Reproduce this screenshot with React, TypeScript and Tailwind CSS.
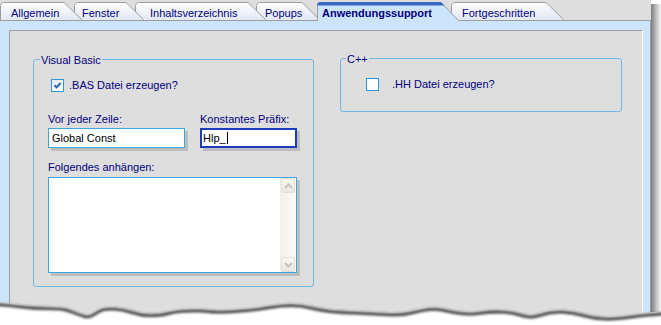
import React from "react";

type TabDef = { label: string; w: number; cls: string; textCls: string; active?: boolean };

const TABS: TabDef[] = [
  { label: "Allgemein", w: 82, cls: "w-[82px] z-[6]", textCls: "pl-[11px]" },
  { label: "Fenster", w: 70, cls: "w-[70px] -ml-[8px] z-[5]", textCls: "pl-[8px]" },
  { label: "Inhaltsverzeichnis", w: 131, cls: "w-[131px] -ml-[9px] z-[4]", textCls: "pl-[15px]" },
  { label: "Popups", w: 64, cls: "w-[64px] -ml-[10px] z-[3]", textCls: "pl-[9px]" },
  { label: "Anwendungssupport", w: 142, cls: "w-[142px] -ml-[3px] z-[10] h-[19px] -mb-px", textCls: "pl-[5px] font-bold", active: true },
  { label: "Fortgeschritten", w: 113, cls: "w-[113px] -ml-[8px] z-[2]", textCls: "pl-[11px]" },
];

function Tab({ t, i }: { t: TabDef; i: number }) {
  const h = t.active ? 19 : 18;
  const w = t.w;
  const outline = `M0.5,${h} V3.5 Q0.5,0.5 3.5,0.5 H${w - 18} L${w - 0.5},${h - 0.5}`;
  const fillPath = `M0,${h} V3.5 Q0,0 3.5,0 H${w - 18} L${w},${h} Z`;
  const gid = `tabg${i}`;
  return (
    <div className={`relative shrink-0 ${t.active ? "" : "h-[18px]"} ${t.cls}`}>
      <svg className="absolute left-0 top-0" width={w} height={h} viewBox={`0 0 ${w} ${h}`}>
        <defs>
          <linearGradient id={gid} x1="0" y1="0" x2="0" y2="1">
            <stop offset="0" stopColor="#ffffff" />
            <stop offset="1" stopColor="#e1e8f3" />
          </linearGradient>
        </defs>
        <path d={fillPath} fill={t.active ? "#cde5fc" : `url(#${gid})`} />
        <path d={outline} fill="none" stroke="#9c9c9c" />
        {t.active && <path d={`M0,3.5 Q0,0 3.5,0 H${w - 18} L${w - 14.5},3.5 Z`} fill="#3a68c4" />}
      </svg>
      <div className={`relative pt-[5px] whitespace-nowrap text-[#000080] ${t.textCls}`}>{t.label}</div>
    </div>
  );
}

function Check({ checked }: { checked?: boolean }) {
  return (
    <span
      className={`inline-flex w-[13px] h-[13px] shrink-0 items-center justify-center border border-[#2f96dc] ${
        checked ? "bg-gradient-to-br from-[#e4e7ea] to-white" : "bg-white"
      }`}
    >
      {checked && (
        <svg width="11" height="11" viewBox="0 0 11 11">
          <path d="M2.5,5.2 L4.6,7.4 L8.6,3" stroke="#2a62c8" strokeWidth="2" fill="none" />
        </svg>
      )}
    </span>
  );
}

function ScrollBtn({ up }: { up?: boolean }) {
  return (
    <div className="w-[14px] h-[15px] mx-auto rounded-[2px] border border-[#e2dfd4] bg-gradient-to-b from-[#f8f7f2] to-[#ebe9e0] flex items-center justify-center">
      <svg width="9" height="6" viewBox="0 0 9 6">
        <path d={up ? "M1,5 L4.5,1.5 L8,5" : "M1,1 L4.5,4.5 L8,1"} stroke="#c5c2b6" strokeWidth="2" fill="none" />
      </svg>
    </div>
  );
}

const PTS: [number, number][] = [
  [-4, 302], [10, 303], [33, 306], [60, 306], [70, 309], [80, 313], [88, 315], [96, 310], [104, 306],
  [122, 307], [140, 313], [160, 313], [174, 309], [200, 308], [215, 310], [250, 308], [280, 303],
  [300, 303], [320, 308], [340, 310], [370, 311], [400, 313], [420, 308], [435, 306], [452, 310],
  [470, 312], [490, 309], [512, 310], [530, 316], [550, 309], [572, 310], [597, 317], [620, 316],
  [640, 313], [655, 312], [665, 311],
];

function smooth(pts: [number, number][], dx = 0, dy = 0) {
  let d = `M${pts[0][0] + dx},${pts[0][1] + dy}`;
  for (let i = 1; i < pts.length - 1; i++) {
    const [x, y] = pts[i];
    const [nx, ny] = pts[i + 1];
    d += ` Q${x + dx},${y + dy} ${(x + nx) / 2 + dx},${(y + ny) / 2 + dy}`;
  }
  const last = pts[pts.length - 1];
  d += ` L${last[0] + dx},${last[1] + dy}`;
  return d;
}

export default function App() {
  return (
    <div className="relative w-[661px] h-[325px] overflow-hidden bg-white font-['Liberation_Sans',Arial,sans-serif] text-[11px] leading-[13px]">
      <div className="w-[651px] h-[325px] bg-[#dedede] flex flex-col">
        {/* tab strip */}
        <div className="relative z-10 h-[20px] flex items-end">
          {TABS.map((t, i) => (
            <Tab key={t.label} t={t} i={i} />
          ))}
        </div>
        {/* tab panel */}
        <div className="flex-1 flex flex-col border-t border-r border-[#9c9c9c] bg-[#cde5fc] pl-[9px] pt-[9px] pr-[7px]">
          <div className="flex-1 flex items-start gap-[26px] border-l border-t border-r border-l-[#a0a0a0] border-t-[#a0a0a0] border-r-white bg-[#dedede] pl-[23px] pt-[28px]">
            {/* Visual Basic group */}
            <div className="relative w-[281px] border border-[#6cb8e6] rounded-[3px] pl-[14px] pt-[19px] pb-[13px]">
              <span className="absolute left-[6px] -top-[6px] px-px bg-[#dedede] text-[#000080]">Visual Basic</span>
              <div className="flex items-center ml-[3px] h-[13px]">
                <Check checked />
                <span className="ml-[5px] text-[#000080]">.BAS Datei erzeugen?</span>
              </div>
              <div className="mt-[21px] flex gap-[15px]">
                <div className="w-[137px]">
                  <div className="text-[#000080]">Vor jeder Zeile:</div>
                  <div className="mt-[2px] h-[20px] border border-[#3ea6e0] bg-white pl-[3px] leading-[18px] text-black shadow-[3px_3px_0_#bdbdbd]">
                    Global Const
                  </div>
                </div>
                <div className="w-[97px]">
                  <div className="text-[#000080]">Konstantes Präfix:</div>
                  <div className="mt-[2px] h-[20px] border-2 border-[#1a3cbc] bg-white pl-px leading-[16px] text-black shadow-[3px_3px_0_#bdbdbd] flex items-center">
                    <span>Hlp_</span>
                    <span className="inline-block w-px h-[12px] bg-black ml-px" />
                  </div>
                </div>
              </div>
              <div className="mt-[13px] text-[#000080]">Folgendes anhängen:</div>
              <div className="mt-[3px] flex h-[96px] w-[249px] border border-[#3ea6e0] bg-white shadow-[3px_3px_0_#bdbdbd]">
                <div className="flex-1" />
                <div className="w-[16px] flex flex-col justify-between bg-gradient-to-r from-[#f2f0e9] to-[#fbfaf6]">
                  <ScrollBtn up />
                  <ScrollBtn />
                </div>
              </div>
            </div>
            {/* C++ group */}
            <div className="relative -mt-px w-[282px] border border-[#6cb8e6] rounded-[3px] pl-[25px] pt-[19px] pb-[20px]">
              <span className="absolute left-[5px] -top-[6px] px-px bg-[#dedede] text-[#000080]">C++</span>
              <div className="flex items-center h-[13px]">
                <Check />
                <span className="ml-[13px] text-[#000080]">.HH Datei erzeugen?</span>
              </div>
            </div>
          </div>
        </div>
      </div>
      {/* window drop shadow (right) */}
      <div className="absolute left-[651px] top-[4px] w-[10px] h-[312px] bg-gradient-to-r from-[#7c7c7c] via-[#bdbdbd] to-[#f6f6f6]" />
      {/* torn bottom edge */}
      <svg className="absolute left-0 top-[285px]" width="661" height="40" viewBox="0 285 661 40">
        <defs>
          <filter id="tornblur" x="-5%" y="-50%" width="110%" height="200%">
            <feGaussianBlur stdDeviation="1.3" />
          </filter>
        </defs>
        <path d={`${smooth(PTS)} L665,330 L-4,330 Z`} fill="#ffffff" />
        <path d={smooth(PTS, 1, 2.5)} fill="none" stroke="#3c3c3c" strokeWidth="3.5" filter="url(#tornblur)" opacity="0.85" />
      </svg>
    </div>
  );
}
